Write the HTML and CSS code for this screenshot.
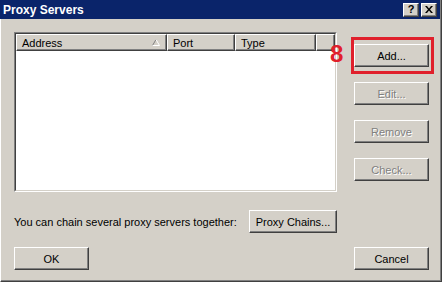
FILE: index.html
```html
<!DOCTYPE html>
<html lang="en">
<head>
  <meta charset="UTF-8" />
  <title>Proxy Servers</title>
  <link rel="stylesheet" href="styles.css">
</head>
<body>
  <div class="window">
    <div class="titlebar">
      <span class="title">Proxy Servers</span>
      <div class="caption-buttons">
        <span class="cap-btn cap-help">?</span>
        <span class="cap-btn">
          <svg width="8" height="7" viewBox="0 0 8 7">
            <path d="M0 0h2l2 2.5L6 0h2L5 3.5 8 7H6L4 4.5 2 7H0l3-3.5z" fill="#000"/>
          </svg>
        </span>
      </div>
    </div>

    <div class="content">
      <div class="main-row">
        <div class="listview">
          <div class="list-inner">
            <div class="list-header">
              <div class="col col-address">
                <span>Address</span>
                <svg class="sort" width="8" height="7" viewBox="0 0 8 7">
                  <path d="M0.5 6.5L4 0.5" stroke="#808080" fill="none"/>
                  <path d="M4 0.5L7.5 6.5" stroke="#fff" fill="none"/>
                  <path d="M0.5 6.5H7.5" stroke="#fff" fill="none"/>
                </svg>
              </div>
              <div class="col col-port">Port</div>
              <div class="col col-type">Type</div>
              <div class="col col-rest"></div>
            </div>
            <div class="list-body"></div>
          </div>
        </div>

        <div class="side-buttons">
          <div class="add-wrap">
            <button class="btn">Add...</button>
            <span class="callout-num">8</span>
            <span class="callout-box"></span>
          </div>
          <button class="btn" disabled>Edit...</button>
          <button class="btn" disabled>Remove</button>
          <button class="btn" disabled>Check...</button>
        </div>
      </div>

      <div class="chain-row">
        <span class="chain-label">You can chain several proxy servers together:</span>
        <button class="btn btn-wide">Proxy Chains...</button>
      </div>

      <div class="bottom-row">
        <button class="btn">OK</button>
        <button class="btn">Cancel</button>
      </div>
    </div>
  </div>
</body>
</html>
```

FILE: styles.css
```css
body {
  margin: 0;
  background: #d4d0c8;
  font-family: "Liberation Sans", Arial, sans-serif;
  font-size: 11px;
}
.window {
  width: 442px;
  height: 282px;
  box-sizing: border-box;
  background: #d4d0c8;
  border-left: 1px solid #fff;
  border-right: 1px solid #404040;
  border-bottom: 1px solid #404040;
  box-shadow: inset -1px -1px #808080;
  display: flex;
  flex-direction: column;
}
.titlebar {
  height: 19px;
  margin-left: -1px;
  margin-right: 1px;
  background: #0a246a;
  display: flex;
  align-items: center;
  justify-content: space-between;
  padding: 0 3px 0 3px;
  box-sizing: border-box;
}
.title {
  color: #fff;
  font-weight: bold;
  font-size: 12px;
}
.caption-buttons {
  display: flex;
  gap: 2px;
}
.cap-btn {
  width: 16px;
  height: 14px;
  box-sizing: border-box;
  background: #d4d0c8;
  border: 1px solid;
  border-color: #fff #404040 #404040 #fff;
  box-shadow: inset -1px -1px #808080;
  display: flex;
  align-items: center;
  justify-content: center;
}
.cap-help {
  font-weight: bold;
  font-size: 11px;
  line-height: 1;
}
.content {
  flex: 1;
  padding: 13px 0 0 13px;
  display: flex;
  flex-direction: column;
}
.main-row {
  display: flex;
  gap: 17px;
}
.listview {
  width: 323px;
  height: 160px;
  box-sizing: border-box;
  border: 1px solid;
  border-color: #808080 #fff #fff #808080;
}
.list-inner {
  height: 100%;
  box-sizing: border-box;
  border: 1px solid;
  border-color: #404040 #d4d0c8 #d4d0c8 #404040;
  background: #fff;
  display: flex;
  flex-direction: column;
}
.list-header {
  display: flex;
  height: 17px;
}
.col {
  box-sizing: border-box;
  background: #d4d0c8;
  border: 1px solid;
  border-color: #fff #404040 #404040 #fff;
  box-shadow: inset -1px -1px #808080;
  padding: 0 5px;
  display: flex;
  align-items: center;
}
.col-address {
  width: 151px;
  justify-content: space-between;
}
.col-port {
  width: 68px;
}
.col-type {
  width: 81px;
}
.col-rest {
  flex: 1;
}
.sort {
  margin-right: 1px;
}
.list-body {
  flex: 1;
}
.side-buttons {
  display: flex;
  flex-direction: column;
  gap: 15px;
  margin-top: 12px;
}
.btn {
  width: 75px;
  height: 23px;
  box-sizing: border-box;
  padding: 0;
  background: #d4d0c8;
  border: 1px solid;
  border-color: #fff #404040 #404040 #fff;
  box-shadow: inset -1px -1px #808080;
  font-family: inherit;
  font-size: 11px;
  color: #000;
}
.btn:disabled {
  color: #808080;
  text-shadow: 1px 1px 0 #fff;
}
.btn-wide {
  width: 88px;
}
.add-wrap {
  position: relative;
  height: 23px;
}
.callout-box {
  position: absolute;
  left: -3px;
  top: -7px;
  right: -5px;
  bottom: -7px;
  border: 3px solid #e0202c;
}
.callout-num {
  position: absolute;
  left: -24px;
  top: -2px;
  color: #e0202c;
  font-weight: bold;
  font-size: 24px;
  line-height: 24px;
}
.chain-row {
  width: 323px;
  margin-top: 18px;
  display: flex;
  align-items: center;
  justify-content: space-between;
}
.bottom-row {
  width: 415px;
  margin-top: 14px;
  display: flex;
  justify-content: space-between;
}
```
